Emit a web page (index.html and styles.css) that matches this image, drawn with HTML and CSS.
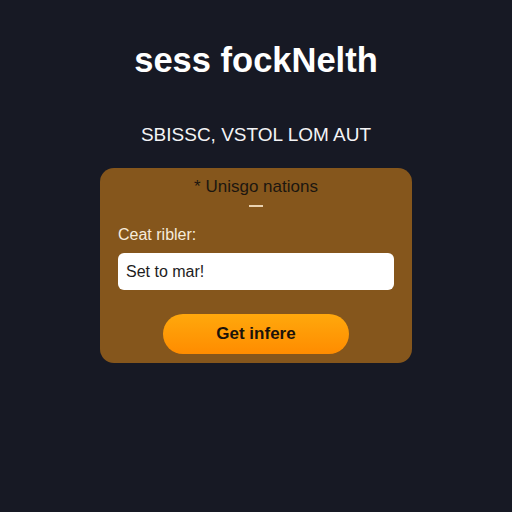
FILE: index.html
```html
<!DOCTYPE html>
<html>
<head>
<meta charset="utf-8">
<link rel="stylesheet" href="styles.css">
</head>
<body>
<main class="page">
  <h1 class="title">sess fockNelth</h1>
  <p class="subtitle">SBISSC, VSTOL LOM AUT</p>
  <section class="card">
    <h2 class="card-title">* Unisgo nations</h2>
    <div class="dash"></div>
    <label class="label">Ceat ribler:</label>
    <div class="input">Set to mar!</div>
    <button class="btn">Get infere</button>
  </section>
</main>
</body>
</html>
```
FILE: styles.css
```css
html, body {
  margin: 0;
  padding: 0;
  background: #171924;
  width: 512px;
  height: 512px;
  overflow: hidden;
  font-family: "Liberation Sans", Arial, sans-serif;
}
.page {
  display: flex;
  flex-direction: column;
  align-items: center;
}
.title {
  margin: 40px 0 0;
  font-size: 34.5px;
  font-weight: 700;
  color: #ffffff;
  line-height: 40px;
}
.subtitle {
  margin: 44px 0 0;
  font-size: 19px;
  color: #f4f4f6;
  line-height: 22px;
}
.card {
  margin-top: 22px;
  width: 312px;
  box-sizing: border-box;
  height: 195px;
  background: #85561c;
  border-radius: 14px;
  padding: 8px 18px 0;
  display: flex;
  flex-direction: column;
}
.card-title {
  margin: 0;
  text-align: center;
  font-size: 17px;
  font-weight: 400;
  color: #1c1610;
  line-height: 22px;
}
.dash {
  align-self: center;
  width: 14px;
  height: 2px;
  background: #ead2b0;
  margin-top: 7px;
}
.label {
  margin-top: 18px;
  font-size: 16px;
  color: #f6ecdc;
  line-height: 20px;
}
.input {
  margin-top: 8px;
  height: 37px;
  background: #ffffff;
  border-radius: 6px;
  box-sizing: border-box;
  padding: 0 8px;
  display: flex;
  align-items: center;
  font-size: 16px;
  color: #1d1d1d;
}
.btn {
  align-self: center;
  margin-top: 24px;
  width: 186px;
  height: 40px;
  border: none;
  border-radius: 20px;
  background: linear-gradient(180deg, #ffa80c 0%, #ff8c00 100%);
  font-family: "Liberation Sans", Arial, sans-serif;
  font-size: 17px;
  font-weight: 700;
  color: #1b130a;
}
```
